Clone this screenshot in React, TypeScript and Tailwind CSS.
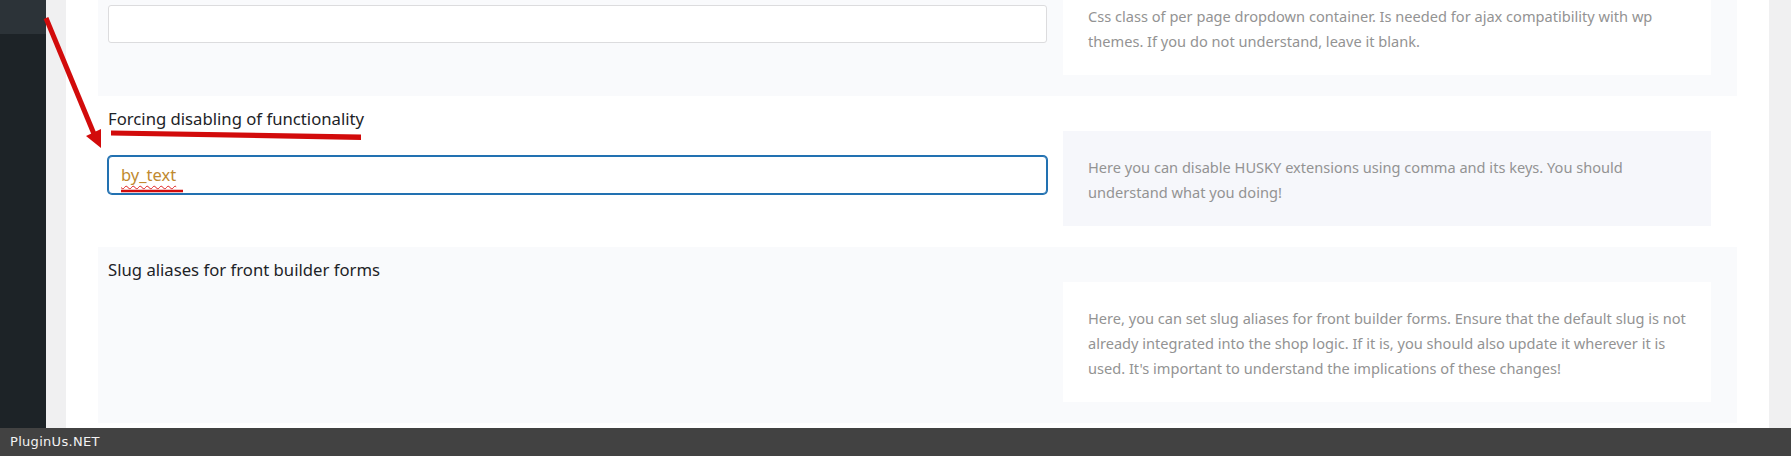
import React from "react";

type SectionProps = {
  label?: string;
  input?: "plain" | "focus" | "none";
  lines: string[];
  shaded: boolean;
};

function Section({ label, input = "none", lines, shaded }: SectionProps) {
  return (
    <div
      className={`flex gap-[16px] pl-[10px] pr-[26px] pt-[11px] pb-[21px] ${
        shaded ? "bg-[#f9fafc]" : "bg-white"
      }`}
    >
      <div className="flex-1 flex flex-col">
        <div className="h-[24px] leading-[24px] text-[16.7px] text-[#1d2327] font-['Noto_Sans',sans-serif] whitespace-nowrap">
          {label}
        </div>
        {input === "plain" && (
          <div className="mt-[25px] h-[38px] bg-white border border-[#dcdcde] rounded-[3px]" />
        )}
        {input === "focus" && (
          <div className="mt-[25px] h-[38px] bg-white border border-[#2271b1] shadow-[0_0_0_1px_#2271b1] rounded-[4px] flex items-center pl-[12px]">
            <span className="text-[16.5px] text-[#c08a30] font-['Noto_Sans',sans-serif] underline decoration-wavy decoration-[#e02020] decoration-1 underline-offset-[4px]">
              by_text
            </span>
          </div>
        )}
      </div>
      <div
        className={`mt-[24px] w-[648px] self-start pl-[25px] pr-[15px] pt-[24px] pb-[21px] text-[14.6px] leading-[25px] text-[#939393] font-['Noto_Sans',sans-serif] ${
          shaded ? "bg-white" : "bg-[#f6f7fb]"
        }`}
      >
        {lines.map((l, i) => (
          <div key={i} className="whitespace-nowrap">
            {l}
          </div>
        ))}
      </div>
    </div>
  );
}

export default function App() {
  return (
    <div className="relative w-full h-[456px] overflow-hidden flex flex-col bg-white">
      <div className="flex h-[428px]">
        <div className="w-[46px] bg-[#1d2327] flex flex-col">
          <div className="h-[34px] bg-[#2c3338]" />
        </div>
        <div className="w-[20px] bg-[#f0f0f1]" />
        <div className="flex-1 bg-white overflow-hidden px-[32px]">
          <div className="-mt-[55px] flex flex-col">
            <Section
              input="plain"
              shaded
              lines={[
                "Css class of per page dropdown container. Is needed for ajax compatibility with wp",
                "themes. If you do not understand, leave it blank.",
              ]}
            />
            <Section
              label="Forcing disabling of functionality"
              input="focus"
              shaded={false}
              lines={[
                "Here you can disable HUSKY extensions using comma and its keys. You should",
                "understand what you doing!",
              ]}
            />
            <Section
              label="Slug aliases for front builder forms"
              shaded
              lines={[
                "Here, you can set slug aliases for front builder forms. Ensure that the default slug is not",
                "already integrated into the shop logic. If it is, you should also update it wherever it is",
                "used. It's important to understand the implications of these changes!",
              ]}
            />
          </div>
        </div>
        <div className="w-[22px] bg-[#f0f0f1]" />
      </div>
      <div className="h-[28px] bg-[#424242] flex items-center pl-[10px] text-[13px] tracking-[0.3px] text-[#f2f2f2] font-['DejaVu_Sans',sans-serif]">
        PluginUs.NET
      </div>
      <svg
        className="absolute left-0 top-0 pointer-events-none"
        width="1791"
        height="456"
        viewBox="0 0 1791 456"
      >
        <line x1="46" y1="18" x2="94" y2="134" stroke="#d20b0b" strokeWidth="5" />
        <polygon points="101,148 86,136 101,129" fill="#d20b0b" />
        <polygon points="111,130.5 361,134.5 361,140 111,135.5" fill="#d20b0b" />
        <line x1="121" y1="191" x2="183" y2="191" stroke="#d20b0b" strokeWidth="2.5" />
      </svg>
    </div>
  );
}
